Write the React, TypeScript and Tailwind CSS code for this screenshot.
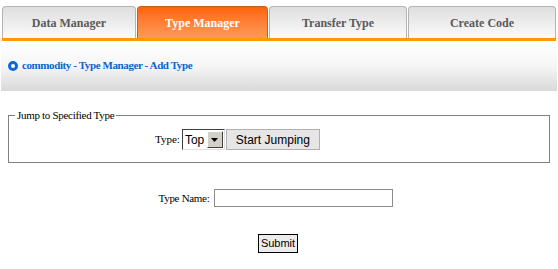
import React from "react";

const tabs = [
  { label: "Data Manager", w: "w-[134px]", active: false },
  { label: "Type Manager", w: "w-[131px]", active: true },
  { label: "Transfer Type", w: "w-[138px]", active: false },
  { label: "Create Code", w: "w-[148px]", active: false },
];

function Tab({ label, w, active }: { label: string; w: string; active: boolean }) {
  return (
    <div
      className={`${w} h-[32px] flex items-center justify-center rounded-t-[4px] border border-b-0 text-[12px] font-bold ${
        active
          ? "border-[#c8601a] bg-gradient-to-b from-[#ff6400] to-[#ff9a55] text-white"
          : "border-[#b4b4b4] bg-gradient-to-b from-[#dedede] to-[#fbfbfb] text-[#5a5a5a]"
      }`}
    >
      {label}
    </div>
  );
}

export default function App() {
  return (
    <div className="w-[558px] h-[269px] bg-white overflow-hidden font-['Liberation_Serif',serif] text-black">
      <div className="flex gap-px pt-[6px] pl-[2px]">
        {tabs.map((t) => (
          <Tab key={t.label} {...t} />
        ))}
      </div>
      <div className="h-[3px] mx-[2px] bg-[#ff9900]" />

      {/* breadcrumb */}
      <div className="h-[50px] mx-[1px] bg-gradient-to-b from-white via-[#f6f6f6] to-[#d9d9d9] flex items-center pl-[7px] gap-[4px] pb-[1px]">
        <span className="w-[10px] h-[10px] rounded-full border-[3px] border-[#0b6ad6] bg-white" />
        <span className="text-[11px] font-bold text-[#0a64c8] tracking-[-0.4px]">
          commodity - Type Manager - Add Type
        </span>
      </div>

      <fieldset className="mx-[8px] mt-[18px] h-[54px] border border-[#808080]">
        <legend className="ml-[6px] px-[2px] text-[11px] leading-[12px] tracking-[-0.3px]">Jump to Specified Type</legend>
        <div className="flex items-center mt-[8px] pl-[146px] text-[11px]">
          <span className="mr-[2px]">Type:</span>
          <div className="w-[43px] h-[21px] flex items-stretch border border-t-[#404040] border-l-[#404040] border-b-[#e0e0e0] border-r-[#e0e0e0] bg-white">
            <span className="flex-1 flex items-center pl-[2px] font-['Liberation_Sans',sans-serif] text-[12px]">Top</span>
            <span className="w-[16px] m-[1px] flex items-center justify-center bg-[#d4d0c8] border border-t-white border-l-white border-b-[#404040] border-r-[#404040]">
              <svg width="7" height="4" viewBox="0 0 7 4">
                <path d="M0 0h7L3.5 4z" fill="#000" />
              </svg>
            </span>
          </div>
          <button className="ml-[1px] w-[94px] h-[21px] bg-[#e6e6e6] border border-[#b0b0b0] font-['Liberation_Sans',sans-serif] text-[12px] leading-none">
            Start Jumping
          </button>
        </div>
      </fieldset>

      <div className="flex items-center justify-center mt-[26px] pr-[6px] text-[11px]">
        <span className="mr-[5px] tracking-[-0.3px]">Type Name:</span>
        <div className="w-[179px] h-[18px] border border-[#8c8c8c] bg-white" />
      </div>

      <div className="flex justify-center mt-[27px] pr-[2px]">
        <button className="w-[40px] h-[19px] bg-[#ececec] border border-black font-['Liberation_Sans',sans-serif] text-[11px] leading-none">
          Submit
        </button>
      </div>
    </div>
  );
}
